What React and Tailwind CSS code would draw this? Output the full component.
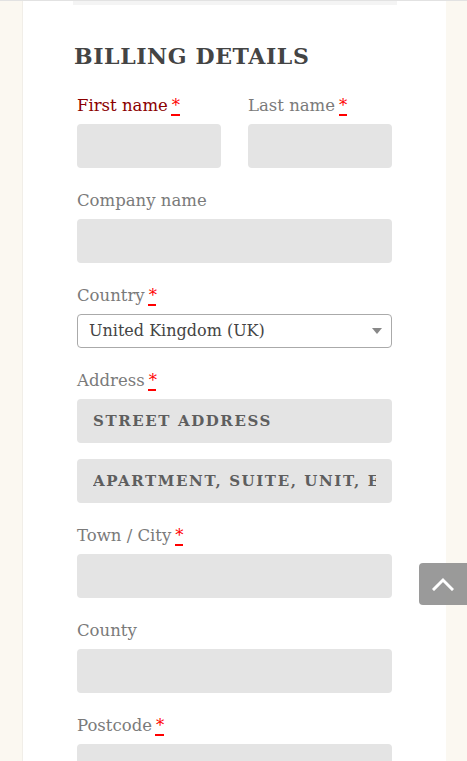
import React from "react";

const serif = { fontFamily: '"DejaVu Serif", "Liberation Serif", serif' };

function Req() {
  return (
    <abbr
      className="ml-[4px] text-[#ff0000] underline decoration-dashed decoration-[#ff0000] decoration-[1.5px] underline-offset-[3px]"
      title="required"
    >
      *
    </abbr>
  );
}

function Label({ children, req, active }) {
  return (
    <label className={`block h-[30px] pt-[3px] mb-[5px] text-[16.5px] leading-[27px] ${active ? "text-[#8b0000]" : "text-[#7a7a7a]"}`}>
      {children}
      {req && <Req />}
    </label>
  );
}

function Input({ placeholder }) {
  return (
    <input
      type="text"
      placeholder={placeholder}
      className="block w-full h-[44px] rounded-[4px] bg-[#e4e4e4] px-[16px] outline-none text-[15px] font-bold tracking-[1.6px] text-[#5e5e5e] placeholder:text-[#5e5e5e] placeholder:font-bold placeholder:opacity-100"
      style={serif}
    />
  );
}

function Field({ label, req, active, children, className = "" }) {
  return (
    <div className={`mb-[16px] ${className}`}>
      <Label req={req} active={active}>{label}</Label>
      {children || <Input />}
    </div>
  );
}

export default function App() {
  return (
    <div className="h-[761px] overflow-hidden bg-[#fbf8f1] border-t border-[#e2e2e2] relative" style={serif}>
      <div className="ml-[22px] w-[424px] h-full bg-white border-l border-[#f1eee8]">
        <div className="ml-[50px] w-[324px] h-[4px] bg-[#f4f4f4]" />
        <div className="pl-[54px] pr-[54px]">
          <h3 className="mt-[36px] mb-[18px] text-[22px] leading-[30px] font-bold tracking-[0.6px] text-[#444] -ml-[3px]">
            BILLING DETAILS
          </h3>
          <div className="grid grid-cols-2 gap-[27px]">
            <Field label="First name" req active />
            <Field label="Last name" req />
          </div>
          <Field label="Company name" />
          <Field label="Country" req>
            <div className="h-[34px] rounded-[4px] border border-[#aaa] bg-white flex items-center justify-between pl-[11px] pr-[8px]">
              <span className="text-[16px] text-[#444]">United Kingdom (UK)</span>
              <span className="w-0 h-0 border-l-[5px] border-r-[5px] border-t-[6px] border-l-transparent border-r-transparent border-t-[#888] mr-[1px]" />
            </div>
          </Field>
          <Field label="Address" req>
            <Input placeholder="STREET ADDRESS" />
            <div className="h-[16px]" />
            <Input placeholder="APARTMENT, SUITE, UNIT, ETC. (OPTIONAL)" />
          </Field>
          <Field label="Town / City" req />
          <Field label="County" />
          <Field label="Postcode" req />
        </div>
      </div>
      <div className="absolute left-[419px] top-[562px] w-[48px] h-[42px] bg-[#8f8f8f]/90 rounded-l-[4px] flex items-center justify-center">
        <svg width="22" height="14" viewBox="0 0 22 14" fill="none">
          <path d="M2 12 L11 3 L20 12" stroke="white" strokeWidth="3" strokeLinecap="square" />
        </svg>
      </div>
    </div>
  );
}
